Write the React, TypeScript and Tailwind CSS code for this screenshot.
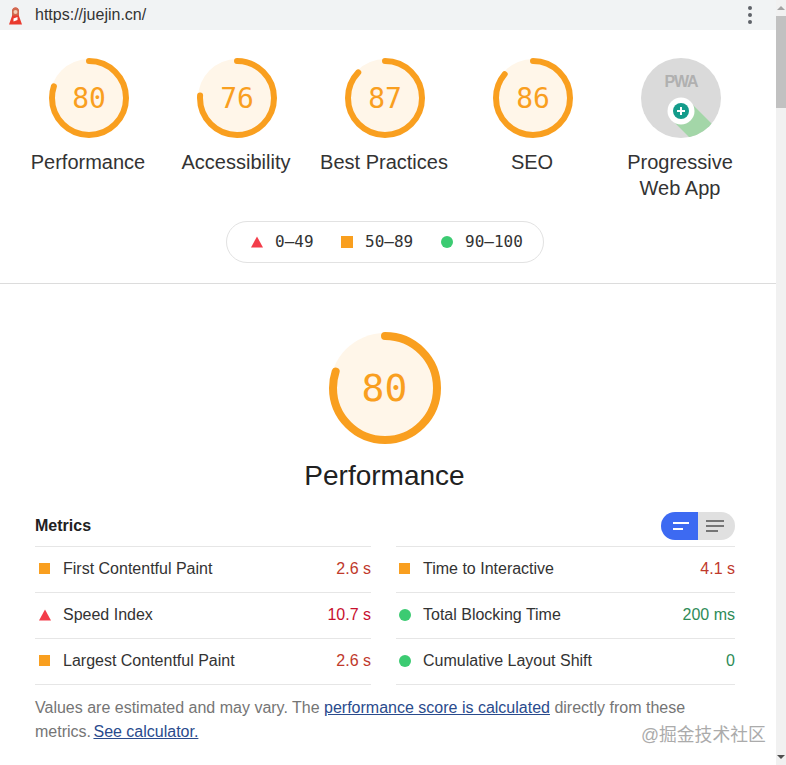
const SANS = "font-['Liberation_Sans',Arial,sans-serif]";

function Gauge({ score, big }: { score: number; big?: boolean }) {
  const size = big ? 112 : 80;
  const sw = big ? 8 : 6;
  const r = (size - sw) / 2;
  const c = 2 * Math.PI * r;
  return (
    <div className={big ? "relative w-[112px] h-[112px]" : "relative w-[80px] h-[80px] ml-[2px]"}>
      <svg width={size} height={size} viewBox={`0 0 ${size} ${size}`}>
        <circle cx={size / 2} cy={size / 2} r={size / 2 - 1} fill="#fff6e9" />
        <circle
          cx={size / 2}
          cy={size / 2}
          r={r}
          fill="none"
          stroke="#f99f1f"
          strokeWidth={sw}
          strokeLinecap="round"
          strokeDasharray={`${(c * score) / 100} ${c}`}
          transform={`rotate(-90 ${size / 2} ${size / 2})`}
        />
      </svg>
      <div
        className={
          big
            ? "absolute inset-0 flex items-center justify-center font-['DejaVu_Sans_Mono',monospace] text-[38px] text-[#f99f1f]"
            : "absolute inset-0 flex items-center justify-center pt-[2px] font-['DejaVu_Sans_Mono',monospace] text-[28px] text-[#f99f1f]"
        }
      >
        {score}
      </div>
    </div>
  );
}

function PwaGauge() {
  return (
    <svg width="80" height="80" viewBox="0 0 80 80" className="ml-[2px]">
      <defs>
        <clipPath id="pwa-clip">
          <circle cx="40" cy="40" r="40" />
        </clipPath>
      </defs>
      <circle cx="40" cy="40" r="40" fill="#dadada" />
      <g clipPath="url(#pwa-clip)">
        <path d="M31 62 L49 44 L76 71 L58 89 Z" fill="#a3d6a8" />
      </g>
      <text
        x="40"
        y="29"
        textAnchor="middle"
        fontFamily="'Liberation Sans',Arial,sans-serif"
        fontWeight="700"
        fontSize="16"
        letterSpacing="-1.2"
        fill="#b0b0b0"
      >
        PWA
      </text>
      <circle cx="40" cy="53" r="13.5" fill="#fff" />
      <circle cx="40" cy="53" r="8" fill="#149c8b" />
      <path d="M40 49 V57 M36 53 H44" stroke="#fff" strokeWidth="2" />
    </svg>
  );
}

function Category({ score, label }: { score?: number; label: string }) {
  return (
    <div className="w-[148px] flex flex-col items-center">
      {score !== undefined ? <Gauge score={score} /> : <PwaGauge />}
      <div className="mt-[11px] text-center text-[20px] leading-[26px] text-[#333] w-[130px]">{label}</div>
    </div>
  );
}

function Triangle() {
  return (
    <svg width="12" height="12" viewBox="0 0 12 12" className="block">
      <path d="M6 0.5 L12 11.5 H0 Z" fill="#f33d4a" />
    </svg>
  );
}

function Dot() {
  return <span className="block w-[12px] h-[12px] rounded-full bg-[#3ccb72]" />;
}

function Metric({
  icon,
  label,
  value,
  color,
  right,
}: {
  icon: "sq" | "tri" | "dot";
  label: string;
  value: string;
  color: string;
  right?: boolean;
}) {
  return (
    <div className="h-[46px] flex items-center border-t border-[#e6e6e6] text-[16px] pb-[2px]">
      <div className={right ? "w-[27px] pl-[3px] flex items-center" : "w-[28px] pl-[4px] flex items-center"}>
        {icon === "sq" ? (
          <span className="block w-[11px] h-[11px] bg-[#f99f1f]" />
        ) : icon === "tri" ? (
          <Triangle />
        ) : (
          <Dot />
        )}
      </div>
      <div className="flex-1 text-[#333]">{label}</div>
      <div className={color}>{value}</div>
    </div>
  );
}

export default function App() {
  return (
    <div className={`${SANS} relative flex w-[786px] h-[765px] overflow-hidden bg-white`}>
      <div className="w-[776px] shrink-0">
        <div className="h-[30px] bg-[#f1f3f4] flex items-center pl-[9px] pr-[24px]">
          <svg width="13" height="18" viewBox="0 0 13 18" className="mr-[13px] mt-[1px]">
            <path d="M6.5 0.5 C9 0.5 10 2.5 10 5 V9 L13 17.5 H0 L3 9 V5 C3 2.5 4 0.5 6.5 0.5 Z" fill="#ea3a2e" />
            <path d="M3 3.5 C3.5 1.5 5 0.5 6.5 0.5 C8 0.5 9.5 1.5 10 3.5 V8.5 H3 Z" fill="#cf6a50" />
            <circle cx="6.5" cy="5" r="2" fill="#f3cdb4" />
            <path d="M4.5 11.5 L8.5 10 V13 L4.5 14.5 Z" fill="#fff" />
          </svg>
          <span className="text-[16px] text-[#333]">https://juejin.cn/</span>
          <div className="ml-auto flex flex-col gap-[3px]">
            <span className="block w-[4px] h-[4px] rounded-full bg-[#5f6368]" />
            <span className="block w-[4px] h-[4px] rounded-full bg-[#5f6368]" />
            <span className="block w-[4px] h-[4px] rounded-full bg-[#5f6368]" />
          </div>
        </div>

        <div className="flex pl-[14px] pt-[28px] h-[191px] items-start">
          <Category score={80} label="Performance" />
          <Category score={76} label="Accessibility" />
          <Category score={87} label="Best Practices" />
          <Category score={86} label="SEO" />
          <Category label="Progressive Web App" />
        </div>

        <div className="flex justify-start pl-[226px]">
          <div className="w-[318px] h-[42px] rounded-[21px] border border-[#e2e2e2] flex items-center pl-[24px] font-['DejaVu_Sans_Mono',monospace] text-[16px] text-[#333]">
            <Triangle />
            <span className="ml-[12px] w-[66px]">0–49</span>
            <span className="block w-[12px] h-[12px] bg-[#f99f1f]" />
            <span className="ml-[12px] w-[76px]">50–89</span>
            <Dot />
            <span className="ml-[12px]">90–100</span>
          </div>
        </div>

        <div className="mt-[20px] border-t border-[#dcdcdc] pt-[48px] pr-[7px] flex flex-col items-center">
          <Gauge score={80} big />
          <div className="mt-[15px] text-[28px] leading-[34px] text-[#212121]">Performance</div>
        </div>

        <div className="pl-[35px] pr-[41px] mt-[13px]">
          <div className="h-[40px] flex items-center justify-between pb-[1px]">
            <span className="font-bold text-[16px] text-[#212121]">Metrics</span>
            <div className="flex w-[74px] h-[28px] mt-[1px]">
              <div className="w-[37px] rounded-l-[14px] bg-[#3d6af2] flex flex-col items-start justify-center gap-[4px] pl-[12px]">
                <span className="block w-[16px] h-[2px] bg-white" />
                <span className="block w-[10px] h-[2px] bg-white" />
              </div>
              <div className="w-[37px] rounded-r-[14px] bg-[#e0e0e0] flex flex-col justify-center gap-[3px] pl-[8px]">
                <span className="block w-[18px] h-[2px] bg-[#757575]" />
                <span className="block w-[18px] h-[2px] bg-[#757575]" />
                <span className="block w-[12px] h-[2px] bg-[#757575]" />
              </div>
            </div>
          </div>
          <div className="flex gap-[25px]">
            <div className="w-[336px] border-b border-[#e6e6e6]">
              <Metric icon="sq" label="First Contentful Paint" value="2.6 s" color="text-[#c0392b]" />
              <Metric icon="tri" label="Speed Index" value="10.7 s" color="text-[#c8102e]" />
              <Metric icon="sq" label="Largest Contentful Paint" value="2.6 s" color="text-[#c0392b]" />
            </div>
            <div className="w-[339px] border-b border-[#e6e6e6]">
              <Metric right icon="sq" label="Time to Interactive" value="4.1 s" color="text-[#c0392b]" />
              <Metric right icon="dot" label="Total Blocking Time" value="200 ms" color="text-[#2e8b57]" />
              <Metric right icon="dot" label="Cumulative Layout Shift" value="0" color="text-[#2e8b57]" />
            </div>
          </div>
          <p className="mt-[11px] w-[680px] text-[16px] leading-[24px] text-[#757575]">
            Values are estimated and may vary. The{" "}
            <a className="text-[#2a4b8d] underline">performance score is calculated</a> directly from these metrics.{" "}
            <a className="text-[#2a4b8d] underline ml-[-2px]">See calculator.</a>
          </p>
        </div>
      </div>

      <div className="w-[10px] bg-[#f1f1f1] flex flex-col items-center">
        <div className="h-[16px] flex items-center justify-center">
          <span className="block w-0 h-0 border-x-[4px] border-x-transparent border-b-[4px] border-b-[#a3a3a3]" />
        </div>
        <div className="w-full h-[92px] bg-[#c1c1c1]" />
        <div className="mt-auto h-[16px] flex items-center justify-center">
          <span className="block w-0 h-0 border-x-[4px] border-x-transparent border-t-[4px] border-t-[#505050]" />
        </div>
      </div>

      <div className="absolute left-[641px] top-[723px] text-[17.8px] leading-[24px] text-[#ababab] font-['Liberation_Sans','Noto_Sans_CJK_SC',sans-serif] bg-white/40">
        @掘金技术社区
      </div>
    </div>
  );
}
